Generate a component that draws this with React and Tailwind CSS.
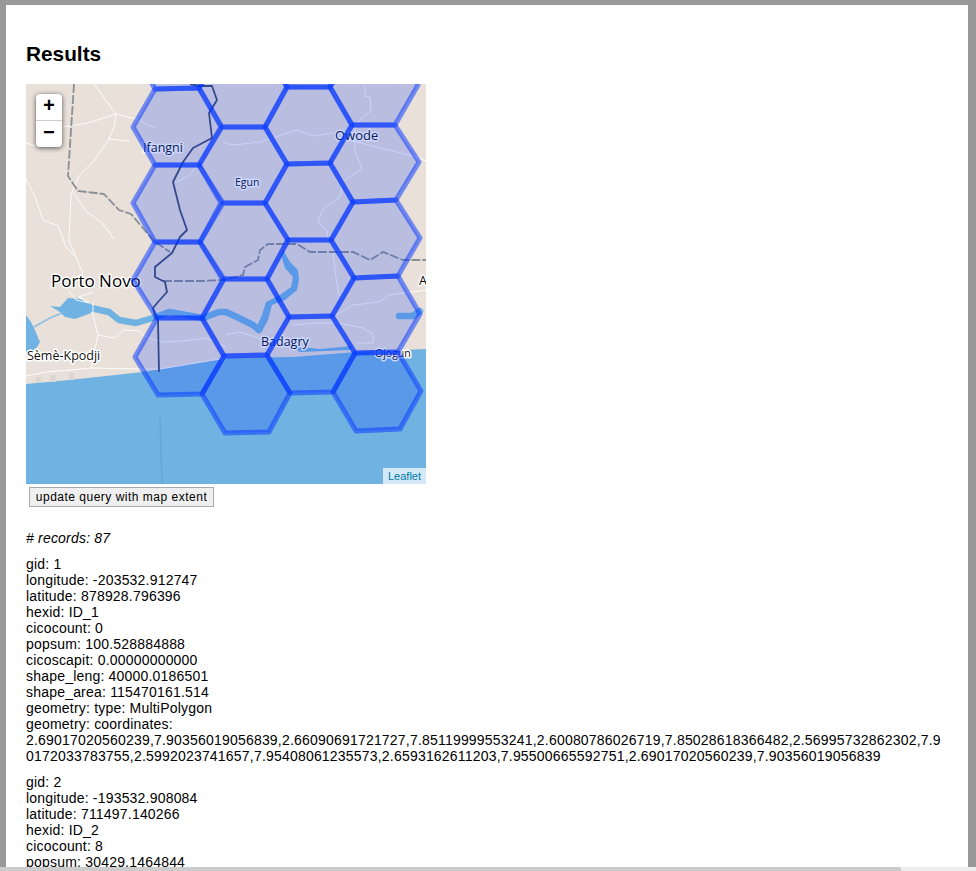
const hexes = [
  '133,50 155,12 199,11 221,50 199,88 155,89',
  '133,127 155,89 199,88 221,127 199,165 155,165',
  '133,203 155,165 199,165 221,203 200,242 155,242',
  '133,280 155,242 200,242 223,280 202,318 157,318',
  '135,357 157,318 202,318 224,356 202,394 158,395',
  '199,88 221,50 265,50 287,87 265,127 222,127',
  '199,165 222,127 265,127 287,164 265,203 223,203',
  '200,242 223,203 265,203 288,240 267,279 224,279',
  '202,318 224,279 267,279 289,317 267,355 224,356',
  '202,394 224,356 267,355 290,393 269,432 225,433',
  '265,50 287,11 330,11 352,49 330,87 287,87',
  '265,127 287,87 330,87 352,125 330,163 287,164',
  '265,203 287,164 330,163 353,202 331,240 288,240',
  '267,279 288,240 331,240 354,278 332,316 289,317',
  '267,355 289,317 332,316 355,353 333,392 290,393',
  '330,87 352,48 395,48 418,85 395,125 352,125',
  '330,163 352,125 395,125 419,162 396,200 353,202',
  '331,240 353,202 396,200 420,238 398,276 354,278',
  '332,316 354,278 398,276 420,314 398,352 355,353',
  '333,392 355,353 398,352 421,391 400,429 356,431',
];

const roads = [
  '94,84 116,114 136,119 155,128',
  '63,127 88,123 116,114',
  '26,143 36,146',
  '116,114 114,127 108,141 93,162 79,176 71,194 69,241 76,257 83,274',
  '73,192 86,211 103,224 114,239',
  '108,139 129,141',
  '26,179 36,199 43,220 58,226 66,247 76,257',
  '26,376 46,372 93,368 139,369 160,369 226,358',
  '93,303 93,315 98,335 91,368',
  '98,335 114,338 124,330 139,331 146,337 163,342 183,341 206,338 226,347',
  '68,290 76,300 89,303 79,297 93,292',
  '203,155 190,175 177,182',
  '223,142 233,145 260,142 297,130 313,136 333,133',
  '353,141 417,157 426,161',
  '365,86 365,96 370,97 371,111 363,117 355,126 355,151 362,169 343,181 340,197 323,209 318,222 327,231 328,241',
  '226,335 239,332 259,338 266,348',
  '293,325 313,323 339,323 363,328 374,335 373,343 356,343',
  '336,315 353,305 379,302 389,295 426,290',
  '333,252 336,278 339,295',
];

const records = [
  [
    'gid: 1',
    'longitude: -203532.912747',
    'latitude: 878928.796396',
    'hexid: ID_1',
    'cicocount: 0',
    'popsum: 100.528884888',
    'cicoscapit: 0.00000000000',
    'shape_leng: 40000.0186501',
    'shape_area: 115470161.514',
    'geometry: type: MultiPolygon',
    'geometry: coordinates:',
    '2.69017020560239,7.90356019056839,2.66090691721727,7.85119999553241,2.60080786026719,7.85028618366482,2.56995732862302,7.90172033783755,2.5992023741657,7.95408061235573,2.6593162611203,7.95500665592751,2.69017020560239,7.90356019056839',
  ],
  [
    'gid: 2',
    'longitude: -193532.908084',
    'latitude: 711497.140266',
    'hexid: ID_2',
    'cicocount: 8',
    'popsum: 30429.1464844',
  ],
];

function MapLabel({ x, y, size, weight = 400, fill = '#0d1326', children }) {
  return (
    <text
      x={x}
      y={y}
      fontSize={size}
      fontWeight={weight}
      fill={fill}
      stroke="#ffffff"
      strokeWidth="3"
      strokeLinejoin="round"
      paintOrder="stroke"
      fontFamily="'Open Sans', sans-serif"
    >
      {children}
    </text>
  );
}

function HexMap() {
  return (
    <svg viewBox="26 84 400 400" className="block w-full h-full">
      <rect x="26" y="84" width="400" height="400" fill="#e8e0d9" />

      {/* sea */}
      <polygon
        points="26,384 69,380 143,372 226,358 293,357 356,352 426,349 426,484 26,484"
        fill="#70b3e3"
      />
      <path d="M290 346 L320 349 L352 346 L350 350 L300 352 Z" fill="#70b3e3" />
      <g fill="#d9d6d3">
        <rect x="36" y="377" width="5" height="6" />
        <rect x="50" y="375" width="6" height="7" />
        <rect x="69" y="373" width="5" height="7" />
      </g>
      <line x1="160" y1="417" x2="162" y2="484" stroke="#62a6da" strokeWidth="1.5" />

      {/* lagoon and rivers */}
      <polygon points="26,315 31,322 34,328 40,342 35,350 26,352" fill="#70b3e3" />
      <polygon points="50,306 60,307 68,298 80,299 91,304 91,313 75,319 65,317 60,312" fill="#70b3e3" />
      <polyline points="34,327 50,318 62,313" fill="none" stroke="#8cc0e4" strokeWidth="1.5" />
      <polygon
        points="283,250 290,262 298,270 299,280 297,290 285,300 272,305 268,320 262,331 257,326 262,315 266,302 280,295 291,287 293,277 285,268 281,255"
        fill="#70b3e3"
      />
      <g fill="none" stroke="#70b3e3" strokeLinecap="round" strokeLinejoin="round">
        <polyline
          points="91,308 109,312 119,320 136,323 156,317 169,312 186,315 203,318 219,312 226,312 239,318 253,325 259,330"
          strokeWidth="6.5"
        />
        <polyline points="399,316 413,316 420,311" strokeWidth="6.5" />
        <polyline points="250,323 262,330" strokeWidth="2" />
      </g>

      {/* roads */}
      <g fill="none" stroke="#ffffff" strokeWidth="1" strokeOpacity="0.9" strokeLinejoin="round">
        {roads.map((p) => (
          <polyline key={p} points={p} />
        ))}
      </g>

      {/* borders */}
      <g fill="none" stroke="#8b9098" strokeWidth="1.8" strokeDasharray="9 2">
        <polyline points="74,84 68,176 78,191 104,194 119,210 131,214 154,241 170,252" />
        <polyline points="163,281 200,281 223,280 243,275 245,267 258,260 260,250 268,244 297,244 310,252 353,252 370,260 383,252 403,260 426,260" />
      </g>
      <polyline
        points="190,84 200,86 212,86 217,100 209,113 212,138 193,148 183,162 173,182 180,210 187,230 180,237 172,253 155,267 155,277 165,282 167,292 158,302 153,308 155,315 158,320 159,372"
        fill="none"
        stroke="#3f4f73"
        strokeWidth="1.8"
        strokeLinejoin="round"
      />

      {/* place names */}
      <MapLabel x="51" y="287" size="17" weight={500} fill="#000000">Porto Novo</MapLabel>
      <MapLabel x="27" y="360" size="12.5" fill="#111111">Sèmè-Kpodji</MapLabel>
      <MapLabel x="143" y="152" size="12.5">Ifangni</MapLabel>
      <MapLabel x="335" y="140" size="13">Owode</MapLabel>
      <MapLabel x="235" y="186" size="10.5">Egun</MapLabel>
      <MapLabel x="261" y="346" size="12.5">Badagry</MapLabel>
      <MapLabel x="375" y="357" size="10.5">Ojogun</MapLabel>
      <MapLabel x="419" y="285" size="12.5" fill="#000000">A</MapLabel>

      {/* hexagons, same look as default leaflet paths */}
      {hexes.map((p) => (
        <polygon
          key={p}
          points={p}
          fill="#0033ff"
          fillOpacity="0.2"
          stroke="#0033ff"
          strokeOpacity="0.5"
          strokeWidth="5"
          strokeLinejoin="round"
        />
      ))}
    </svg>
  );
}

function ZoomControl() {
  return (
    <div className="absolute left-[10px] top-[10px] w-[26px] rounded bg-white shadow-[0_1px_5px_rgba(0,0,0,0.65)] font-['Liberation_Mono',monospace] font-bold text-[20px] text-black">
      <div className="h-[27px] flex items-center justify-center border-b border-[#ccc] rounded-t">+</div>
      <div className="h-[26px] flex items-center justify-center rounded-b">−</div>
    </div>
  );
}

export default function App() {
  return (
    <div className="h-[871px] flex flex-col overflow-hidden bg-[#999999] pt-[5px] font-['Liberation_Sans',Arial,sans-serif] text-[14px] leading-4 text-black">
      <div className="flex-1 min-h-0 ml-[6px] mr-[8px] bg-white px-5 overflow-hidden">
        <h1 className="pt-[37px] text-[20.8px] leading-6 font-bold">Results</h1>
        <div className="relative w-[400px] h-[400px] mt-[18px] overflow-hidden">
          <HexMap />
          <ZoomControl />
          <div className="absolute right-0 bottom-0 h-4 px-[5px] bg-white/70 text-[11px] leading-4 text-[#0078a8]">
            Leaflet
          </div>
        </div>
        <button
          type="button"
          className="block ml-[3px] mt-[3px] w-[185px] h-5 border border-[#aaaaaa] bg-[#efefef] text-[12px] leading-4 tracking-[0.5px] text-black"
        >
          update query with map extent
        </button>
        <p className="mt-[23px] italic tracking-[0.2px]">
          # records: 87
        </p>
        {records.map((rec) => (
          <div key={rec[0]} className="mt-[10px] break-words tracking-[0.2px]">
            {rec.map((line) => (
              <div key={line}>{line}</div>
            ))}
          </div>
        ))}
      </div>
      <div className="h-1 flex bg-[#eeeeee]">
        <div className="w-[901px] bg-[#cccccc]" />
      </div>
    </div>
  );
}
